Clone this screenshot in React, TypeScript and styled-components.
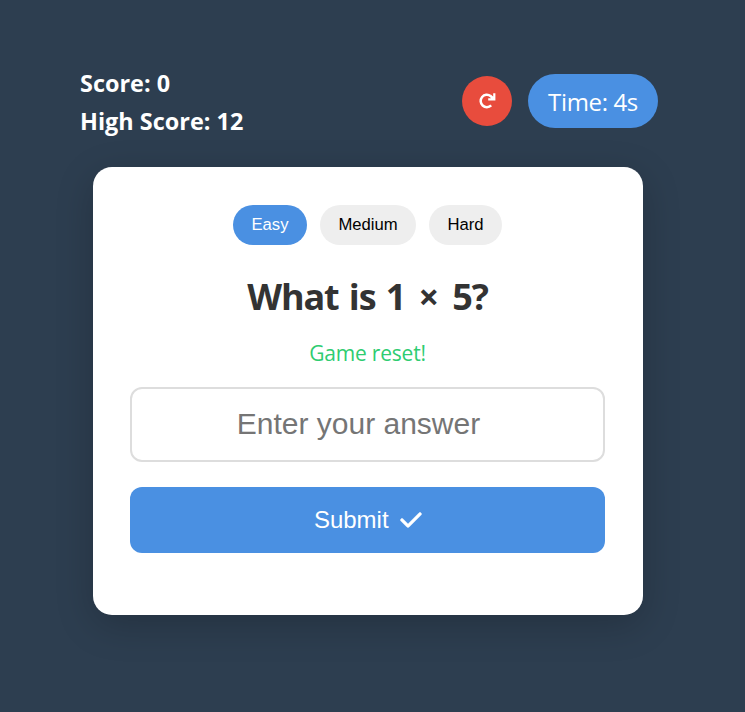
import React, { useState } from "react";
import styled, { createGlobalStyle } from "styled-components";

const GlobalStyle = createGlobalStyle`
  *, *::before, *::after { box-sizing: border-box; }
  body {
    margin: 0;
    background: #2d3e50;
    font-family: "Segoe UI", "Open Sans", "Noto Sans", sans-serif;
  }
`;

const Page = styled.main`
  display: flex;
  flex-direction: column;
  height: 712px;
  overflow: hidden;
`;

const Header = styled.header`
  display: flex;
  justify-content: space-between;
  align-items: flex-start;
  margin: 64px 87px 0 80px;
  height: 103px;
`;

const Scores = styled.div`
  display: flex;
  flex-direction: column;
`;

const Score = styled.div`
  height: 38px;
  line-height: 38px;
  font-size: 23.4px;
  font-weight: 700;
  letter-spacing: 0.02px;
  color: #fff;
  white-space: nowrap;
`;

const Controls = styled.div`
  display: flex;
  align-items: center;
  gap: 16px;
  margin-top: 10px;
`;

const ResetButton = styled.button`
  display: flex;
  align-items: center;
  justify-content: center;
  width: 50px;
  height: 50px;
  padding: 0;
  border: none;
  border-radius: 50%;
  background: #e84c3d;
`;

const Timer = styled.div`
  display: flex;
  align-items: center;
  justify-content: center;
  width: 130px;
  height: 54px;
  padding-top: 1px;
  border-radius: 27px;
  background: #4a90e2;
  color: #fff;
  font-size: 24px;
  letter-spacing: -0.35px;
  white-space: nowrap;
`;

const Card = styled.section`
  display: flex;
  flex-direction: column;
  align-items: center;
  width: 550px;
  height: 448px;
  margin-left: 93px;
  padding: 38px 38px 38px 37px;
  border-radius: 19px;
  background: #fff;
  box-shadow: 0 10px 38px rgba(0, 0, 0, 0.2);
`;

const Levels = styled.div`
  display: flex;
  gap: 13px;
  margin-right: 1px;
`;

const Level = styled.button<{ $active: boolean; $width: number }>`
  width: ${({ $width }) => $width}px;
  height: 40px;
  padding: 0 0 1px 1px;
  border: none;
  border-radius: 20px;
  background: ${({ $active }) => ($active ? "#4a90e2" : "#eee")};
  color: ${({ $active }) => ($active ? "#fff" : "#000")};
  font: 16.67px "Liberation Sans", Arial, sans-serif;
`;

const Question = styled.h1`
  margin: 27px 0 0;
  height: 50px;
  line-height: 50px;
  font-size: 36px;
  font-weight: 700;
  letter-spacing: -1.1px;
  word-spacing: 2px;
  color: #333;
  white-space: nowrap;
`;

const Operator = styled.span`
  margin: 0 4px 0 3px;
`;

const Message = styled.p`
  margin: 16px 0 0;
  height: 30px;
  line-height: 30px;
  font-size: 21px;
  letter-spacing: -0.2px;
  color: #2ecc71;
  white-space: nowrap;
`;

const Answer = styled.input`
  width: 475px;
  height: 75px;
  margin: 19px 0 0;
  padding: 0 18px 2px 0;
  border: 2px solid #ddd;
  border-radius: 12px;
  background: #fff;
  font: 30px "Liberation Sans", Arial, sans-serif;
  text-align: center;
  outline: none;
  &::placeholder { color: #757575; opacity: 1; }
`;

const Submit = styled.button`
  display: flex;
  align-items: center;
  justify-content: center;
  gap: 11.5px;
  width: 475px;
  height: 66px;
  margin: 25px 0 0;
  padding: 0 0 0 1px;
  border: none;
  border-radius: 12px;
  background: #4a90e2;
  color: #fff;
  font: 24px "Liberation Sans", Arial, sans-serif;
`;

const ResetIcon = () => (
  <svg width="18" height="18" viewBox="0 0 18 18" fill="none" aria-hidden="true">
    <path d="M12.6 4A6.2 6.2 0 1 0 13.2 13.4" stroke="#fff" strokeWidth="2.5" />
    <path d="M17.4 1.2V8.4H10.2V6.2H13L11.4 4.6L13 2.8L15.2 4.6V1.2Z" fill="#fff" />
  </svg>
);

const CheckIcon = () => (
  <svg width="22" height="24" viewBox="0 0 448 512" fill="#fff" stroke="#fff" strokeWidth="10" aria-hidden="true">
    <path d="M438.6 105.4c12.5 12.5 12.5 32.8 0 45.3l-256 256c-12.5 12.5-32.8 12.5-45.3 0l-128-128c-12.5-12.5-12.5-32.8 0-45.3s32.8-12.5 45.3 0L160 338.7 393.4 105.4c12.5-12.5 32.8-12.5 45.3 0z" />
  </svg>
);

const levels = [
  { name: "Easy", width: 74 },
  { name: "Medium", width: 96 },
  { name: "Hard", width: 73 },
];

export default function App() {
  const [level, setLevel] = useState("Easy");
  const [answer, setAnswer] = useState("");
  return (
    <>
      <GlobalStyle />
      <Page>
        <Header>
          <Scores>
            <Score>Score: 0</Score>
            <Score>High Score: 12</Score>
          </Scores>
          <Controls>
            <ResetButton aria-label="Reset game"><ResetIcon /></ResetButton>
            <Timer>Time: 4s</Timer>
          </Controls>
        </Header>
        <Card>
          <Levels>
            {levels.map(({ name, width }) => (
              <Level key={name} $active={name === level} $width={width} onClick={() => setLevel(name)}>
                {name}
              </Level>
            ))}
          </Levels>
          <Question>What is 1 <Operator>×</Operator> 5?</Question>
          <Message>Game reset!</Message>
          <Answer
            placeholder="Enter your answer"
            value={answer}
            onChange={(event) => setAnswer(event.target.value)}
          />
          <Submit>Submit <CheckIcon /></Submit>
        </Card>
      </Page>
    </>
  );
}
